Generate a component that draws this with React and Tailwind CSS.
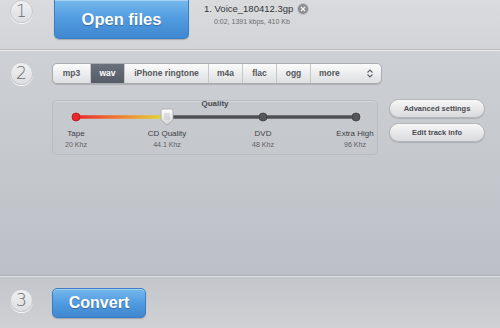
import React from "react";

const font = { fontFamily: '"Liberation Sans", Arial, sans-serif' };

function Step({ n, className = "" }) {
  return (
    <div
      className={
        "flex h-[23px] w-[23px] shrink-0 items-center justify-center rounded-full border border-[#c9cacd] bg-gradient-to-b from-[#eef0f2] to-[#dcdee1] text-[17px] leading-none text-[#6a6c70] shadow-[0_1px_0_#f4f4f4] " +
        className
      }
      style={{ fontFamily: '"DejaVu Sans", sans-serif', fontWeight: 300 }}
    >
      {n}
    </div>
  );
}

const tabs = [
  { t: "mp3", w: 37 },
  { t: "wav", w: 34, active: true },
  { t: "iPhone ringtone", w: 84 },
  { t: "m4a", w: 34 },
  { t: "flac", w: 34 },
  { t: "ogg", w: 34 },
];

function Slider() {
  const stops = [
    { x: 23, a: "Tape", b: "20 Khz" },
    { x: 114, a: "CD Quality", b: "44.1 Khz" },
    { x: 210, a: "DVD", b: "48 Khz" },
    { x: 302, a: "Extra High", b: "96 Khz" },
  ];
  return (
    <div className="relative h-[55px] w-[326px] rounded-[5px] border border-[#b9bdc3] bg-[#c5c8cd]/60 shadow-[inset_0_1px_0_rgba(255,255,255,0.25)]">
      <div className="absolute left-0 right-0 top-[-3px] text-center text-[8px] font-bold text-[#4a4c50]" style={font}>
        Quality
      </div>
      <svg className="absolute left-0 top-0" width="326" height="30" viewBox="0 0 326 30">
        <defs>
          <linearGradient id="g" x1="23" y1="0" x2="114" y2="0" gradientUnits="userSpaceOnUse">
            <stop offset="0" stopColor="#e8282a" />
            <stop offset="0.55" stopColor="#f08a30" />
            <stop offset="1" stopColor="#e0e030" />
          </linearGradient>
          <linearGradient id="th" x1="0" y1="0" x2="0" y2="1">
            <stop offset="0" stopColor="#ffffff" />
            <stop offset="1" stopColor="#d4d5d7" />
          </linearGradient>
        </defs>
        <line x1="114" y1="16" x2="303" y2="16" stroke="#4d4f53" strokeWidth="3.5" />
        <line x1="23" y1="16" x2="114" y2="16" stroke="url(#g)" strokeWidth="3.5" />
        <circle cx="23" cy="16" r="4" fill="#e8282a" stroke="#b01818" strokeWidth="0.8" />
        <circle cx="210" cy="16" r="4" fill="#55575b" stroke="#3b3d40" strokeWidth="0.8" />
        <circle cx="303" cy="16" r="4" fill="#55575b" stroke="#3b3d40" strokeWidth="0.8" />
        <path
          d="M108 10 Q108 8 110 8 L118 8 Q120 8 120 10 L120 19 L114 24 L108 19 Z"
          fill="url(#th)"
          stroke="#a3a5a8"
          strokeWidth="0.8"
        />
        <line x1="112" y1="12" x2="112" y2="19" stroke="#b5b7ba" strokeWidth="0.7" />
        <line x1="114" y1="12" x2="114" y2="19" stroke="#b5b7ba" strokeWidth="0.7" />
        <line x1="116" y1="12" x2="116" y2="19" stroke="#b5b7ba" strokeWidth="0.7" />
      </svg>
      {stops.map((s) => (
        <div
          key={s.a}
          className="absolute top-[27px] flex w-[70px] -translate-x-1/2 flex-col items-center"
          style={{ left: s.x, ...font }}
        >
          <span className="text-[8px] leading-[11px] text-[#3e4044]">{s.a}</span>
          <span className="mt-[1px] text-[7px] leading-[9px] text-[#5e6064]">{s.b}</span>
        </div>
      ))}
    </div>
  );
}

function PillButton({ children }) {
  return (
    <div
      className="flex h-[19px] w-[96px] items-center justify-center rounded-full border border-[#b3b6ba] bg-gradient-to-b from-[#f7f7f8] to-[#d9dadd] text-[7.5px] font-bold text-[#4a4c50] shadow-[0_1px_1px_rgba(0,0,0,0.15)]"
      style={font}
    >
      {children}
    </div>
  );
}

function BlueButton({ children, className = "", text = "" }) {
  return (
    <div
      className={
        "flex items-center justify-center rounded-[5px] border border-[#3a7fc4] bg-gradient-to-b from-[#74b8ec] via-[#519be0] to-[#3f87d0] font-bold text-white shadow-[0_1px_1px_rgba(0,0,0,0.2),inset_0_1px_0_rgba(255,255,255,0.35)] [text-shadow:0_1px_1px_rgba(0,0,0,0.3)] " +
        className +
        " " +
        text
      }
      style={font}
    >
      {children}
    </div>
  );
}

export default function App() {
  return (
    <div className="flex h-[328px] w-[500px] flex-col overflow-hidden bg-[#c6c9ce]">
      {/* Section 1 */}
      <div className="flex h-[49px] items-start bg-gradient-to-b from-[#dadbdd] to-[#d2d4d7] pl-[10px]">
        <Step n="1" />
        <BlueButton className="ml-[21px] h-[39px] w-[135px] rounded-t-none border-t-0" text="text-[16.5px]">
          Open files
        </BlueButton>
        <div className="ml-[15px] pt-[2px]" style={font}>
          <div className="flex items-center text-[9.5px] leading-[13px] text-[#333538]">
            1. Voice_180412.3gp
            <span className="ml-[5px] flex h-[10px] w-[10px] items-center justify-center rounded-full bg-[#8c8e92] shadow-[0_0_0_1px_#c0c2c5]">
              <svg width="6" height="6" viewBox="0 0 6 6">
                <path d="M1 1 L5 5 M5 1 L1 5" stroke="#f2f2f2" strokeWidth="1.4" />
              </svg>
            </span>
          </div>
          <div className="ml-[10px] mt-[2px] text-[7px] leading-[9px] text-[#6a6c70]">0:02, 1391 kbps, 410 Kb</div>
        </div>
      </div>
      <div className="h-px bg-[#b9bbbf]" />
      <div className="h-px bg-[#ececee]" />

      {/* Section 2 */}
      <div className="flex h-[224px] flex-col bg-gradient-to-b from-[#cdd0d4] to-[#bcc0c6] pl-[10px] pt-[11px]">
        <div className="flex items-center">
          <Step n="2" />
          <div className="ml-[19px] flex h-[21px] overflow-hidden rounded-[5px] border border-[#a9acb1] bg-gradient-to-b from-[#fbfbfb] to-[#dedfe1] shadow-[0_1px_1px_rgba(0,0,0,0.15)]" style={font}>
            {tabs.map((t, i) => (
              <div
                key={t.t}
                className={
                  "flex items-center justify-center text-[8.5px] font-bold " +
                  (i > 0 ? "border-l border-[#c4c6c9] " : "") +
                  (t.active
                    ? "bg-gradient-to-b from-[#6a717d] to-[#555c68] text-white"
                    : "text-[#55575b]")
                }
                style={{ width: t.w }}
              >
                {t.t}
              </div>
            ))}
            <div className="flex w-[71px] items-center justify-between border-l border-[#c4c6c9] pl-[8px] pr-[8px] text-[8.5px] font-bold text-[#55575b]">
              more
              <svg width="6" height="9" viewBox="0 0 6 9">
                <path d="M0.5 3.5 L3 1 L5.5 3.5 M0.5 5.5 L3 8 L5.5 5.5" fill="none" stroke="#606266" strokeWidth="1.1" />
              </svg>
            </div>
          </div>
        </div>
        <div className="mt-[14px] flex items-start pl-[42px]">
          <div className="mt-[1px]">
            <Slider />
          </div>
          <div className="ml-[11px] flex flex-col gap-[5px]">
            <PillButton>Advanced settings</PillButton>
            <PillButton>Edit track info</PillButton>
          </div>
        </div>
      </div>
      <div className="h-px bg-[#aeb1b6]" />
      <div className="h-px bg-[#e0e1e3]" />

      {/* Section 3 */}
      <div className="flex flex-1 items-start bg-gradient-to-b from-[#c2c5ca] to-[#cfd1d4] pl-[10px] pt-[11px]">
        <Step n="3" className="mt-[1px]" />
        <BlueButton className="ml-[19px] h-[30px] w-[94px]" text="text-[16px]">
          Convert
        </BlueButton>
      </div>
    </div>
  );
}
